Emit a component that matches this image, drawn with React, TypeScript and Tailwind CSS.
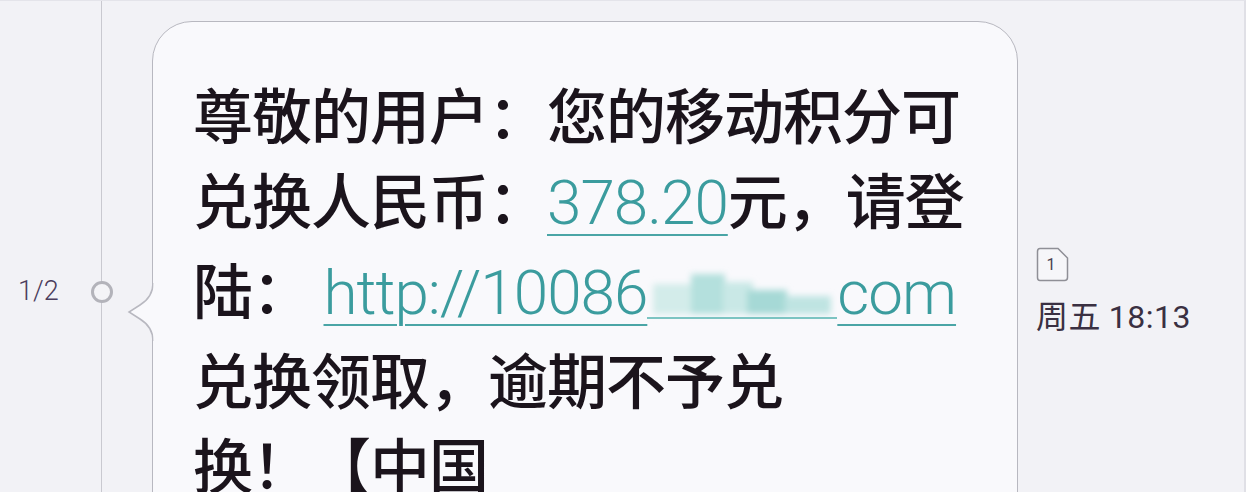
import React from 'react';

const cjk = { fontFamily: '"Noto Sans CJK SC", "Noto Sans", sans-serif' };
const latin = { fontFamily: 'Roboto, "Noto Sans", sans-serif' };

const Link: React.FC<{ children: React.ReactNode }> = ({ children }) => (
  <span className="text-[62px] text-[#3b9c9e] font-light underline decoration-[2px] underline-offset-[10px] decoration-[#4aa5a6]" style={latin}>
    {children}
  </span>
);

// pixelated / blurred part of the URL
const Blurred: React.FC = () => (
  <svg width="190" height="56" viewBox="0 0 190 56" className="inline-block align-[-8px]">
    <defs>
      <filter id="bl" x="-20%" y="-20%" width="140%" height="140%">
        <feGaussianBlur stdDeviation="3" />
      </filter>
    </defs>
    <g filter="url(#bl)">
      <rect x="6" y="18" width="40" height="30" fill="#d3ecea" />
      <rect x="44" y="8" width="34" height="40" fill="#b4e0dd" />
      <rect x="76" y="16" width="30" height="32" fill="#c9e8e6" />
      <rect x="100" y="24" width="40" height="24" fill="#a6d9d6" />
      <rect x="138" y="30" width="46" height="18" fill="#bfe4e2" />
    </g>
    <rect x="0" y="51" width="190" height="2" fill="#7cc4c2" />
  </svg>
);

const SimIcon: React.FC = () => (
  <svg width="33" height="35" viewBox="0 0 33 35" className="block">
    <path d="M4 1.5 H22 L31.5 11 V30.5 Q31.5 33.5 28.5 33.5 H4 Q1.5 33.5 1.5 30.5 V4.5 Q1.5 1.5 4 1.5 Z" fill="#f6f6f9" stroke="#8f8f96" strokeWidth="1.5" />
    <text x="15" y="23" textAnchor="middle" fontSize="16" fill="#4a4050" style={latin}>1</text>
  </svg>
);

const App: React.FC = () => {
  return (
    <div className="w-[1246px] h-[492px] overflow-hidden bg-[#f2f2f6] flex border-t border-[#e4e4ea] border-r-[2px] border-r-[#e0e0e6]" style={cjk}>
      {/* timeline column */}
      <div className="w-[102px] shrink-0 border-r-[1.5px] border-[#c9c9d0] pt-[277px]">
        <div className="flex items-center justify-between pl-[18px] -mr-[12px]">
          <span className="text-[27px] font-light text-[#4b3d5c] leading-none" style={latin}>1/2</span>
          <span className="w-[22px] h-[22px] rounded-full border-[3.5px] border-[#b3b3ba] bg-[#f4f4f7]" />
        </div>
      </div>

      {/* bubble */}
      <div className="relative ml-[50px] mt-[20px] w-[866px] shrink-0">
        <svg className="absolute left-[-26px] top-[262px]" width="30" height="58" viewBox="0 0 30 58">
          <path d="M27 0 Q27 14 14 22 L3 29 L14 36 Q27 44 27 58" fill="#f9f9fc" stroke="#b8b8c0" strokeWidth="1.5" />
          <rect x="27.5" y="-1" width="4" height="60" fill="#f9f9fc" />
        </svg>
        <div className="h-[520px] rounded-[40px] border-[1.5px] border-[#b8b8c0] bg-[#f9f9fc] pl-[40px] pt-[48px] text-[60px] font-medium leading-[85px] text-[#1b141c] tracking-[-1px]">
          <div>尊敬的用户：您的移动积分可</div>
          <div>兑换人民币：<Link>378.20</Link>元，请登</div>
          <div>陆： <Link>http://10086</Link><Blurred /><Link>com</Link></div>
          <div>兑换领取，逾期不予兑</div>
          <div>换！【中国</div>
        </div>
      </div>

      {/* meta column */}
      <div className="pl-[18px] pt-[246px] flex flex-col gap-[16px]">
        <SimIcon />
        <span className="text-[32px] text-[#3a3042] whitespace-nowrap leading-none tracking-[0.5px]">
          周五 <span style={latin}>18:13</span>
        </span>
      </div>
    </div>
  );
};

export default App;
